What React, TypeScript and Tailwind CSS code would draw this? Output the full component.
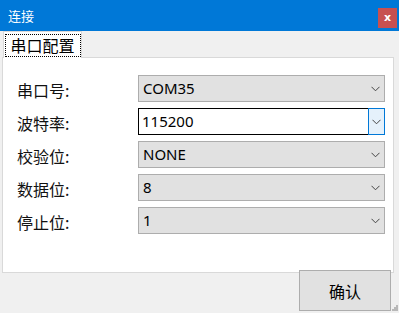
import React from "react"

const cjk = "font-['Noto_Sans_CJK_SC',sans-serif]"
const latin = "font-['Noto_Sans','Noto_Sans_CJK_SC',sans-serif]"

function Chevron() {
  return (
    <svg width="9" height="6" viewBox="0 0 9 6" fill="none">
      <path d="M0.5 0.8 L4.5 4.8 L8.5 0.8" stroke="#444" strokeWidth="1" />
    </svg>
  )
}

function Combo({ value, focused }: { value: string; focused?: boolean }) {
  if (focused) {
    return (
      <div className="relative flex h-[27px] w-[247px] items-center border border-black bg-white">
        <span className={`${latin} pl-[3px] text-[15px] leading-none text-black`}>{value}</span>
        <div className="absolute -top-px -right-px -bottom-px flex w-[17px] items-center justify-center border border-[#0078D7] bg-[#E5F1FB]">
          <Chevron />
        </div>
      </div>
    )
  }
  return (
    <div className="flex h-[27px] w-[247px] items-center justify-between border border-[#ADADAD] bg-[#E1E1E1]">
      <span className={`${latin} pl-[4px] text-[15px] leading-none text-black`}>{value}</span>
      <div className="flex w-[17px] items-center justify-center">
        <Chevron />
      </div>
    </div>
  )
}

const rows = [
  { label: "串口号:", value: "COM35" },
  { label: "波特率:", value: "115200", focused: true },
  { label: "校验位:", value: "NONE" },
  { label: "数据位:", value: "8" },
  { label: "停止位:", value: "1" },
]

export default function App() {
  return (
    <div className="h-[316px] w-[399px] bg-white">
      <div className="relative flex h-[313px] flex-col bg-[#F0F0F0]">
        {/* Title bar */}
        <div className="flex h-[31px] items-center justify-between bg-[#0078D7] pl-[8px] pr-[2px]">
          <span className={`${cjk} text-[13px] text-white`}>连接</span>
          <div className="mt-[4px] flex h-[20px] w-[19px] items-center justify-center bg-[#C75050]">
            <span className="font-['DejaVu_Sans',sans-serif] text-[11px] font-bold leading-none text-white">x</span>
          </div>
        </div>

        {/* Tab strip */}
        <div className="flex pl-[3px]">
          <div className="-mb-px z-10 flex h-[27px] w-[79px] items-center justify-center border border-b-0 border-[#D9D9D9] bg-white">
            <div className={`${cjk} flex h-[23px] w-[76px] items-center justify-center border border-dotted border-black text-[16px] leading-none text-black`}>
              串口配置
            </div>
          </div>
        </div>

        {/* Panel */}
        <div className="ml-[2px] flex h-[216px] w-[392px] flex-col gap-[6px] border border-[#D9D9D9] bg-white pt-[17px] pl-[14px]">
          {rows.map((r) => (
            <div key={r.label} className="flex items-center">
              <span className={`${cjk} mt-[3px] w-[121px] text-[16px] leading-none text-[#111]`}>{r.label}</span>
              <Combo value={r.value} focused={r.focused} />
            </div>
          ))}
        </div>

        {/* Footer */}
        <div className="flex justify-end pr-[8px]">
          <button className={`${cjk} -mt-[3px] h-[41px] w-[92px] border border-[#ADADAD] bg-[#E1E1E1] text-[16px] text-black`}>
            确认
          </button>
        </div>

        {/* Resize grip */}
        <svg className="absolute right-[1px] bottom-[2px]" width="7" height="7" viewBox="0 0 7 7">
          <rect x="5" y="1" width="2" height="2" fill="#B8B8B8" />
          <rect x="3" y="3" width="2" height="2" fill="#B8B8B8" />
          <rect x="5" y="3" width="2" height="2" fill="#B8B8B8" />
          <rect x="1" y="5" width="2" height="2" fill="#B8B8B8" />
          <rect x="3" y="5" width="2" height="2" fill="#B8B8B8" />
          <rect x="5" y="5" width="2" height="2" fill="#B8B8B8" />
        </svg>
      </div>
    </div>
  )
}
